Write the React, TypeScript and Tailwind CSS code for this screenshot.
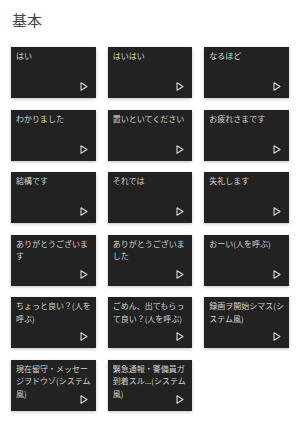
import React from 'react';

const phrases = [
  'はい',
  'はいはい',
  'なるほど',
  'わかりました',
  '置いといてください',
  'お疲れさまです',
  '結構です',
  'それでは',
  '失礼します',
  'ありがとうございます',
  'ありがとうございました',
  'おーい(人を呼ぶ)',
  'ちょっと良い？(人を呼ぶ)',
  'ごめん、出てもらって良い？(人を呼ぶ)',
  '録画ヲ開始シマス(システム風)',
  '現在留守・メッセージヲドウゾ(システム風)',
  '緊急通報・警備員ガ到着スル...(システム風)',
];

const PlayIcon = () => (
  <svg width="8" height="9" viewBox="0 0 8 9" className="absolute right-[8px] bottom-[7px]">
    <polygon points="1,0.8 7,4.5 1,8.2" fill="none" stroke="#d8d8d8" strokeWidth="1.1" strokeLinejoin="round" />
  </svg>
);

const PhraseCard = ({ text }: { text: string }) => (
  <div className="relative h-[51px] bg-[#222222] shadow-[0_1px_3px_rgba(0,0,0,0.25)] pl-[5px] pr-[2px] pt-[3px] overflow-hidden">
    <p className="text-[8px] leading-[12.5px] text-[#d2d2d2] break-all">{text}</p>
    <PlayIcon />
  </div>
);

export default function App() {
  return (
    <div
      className="w-[300px] h-[432px] bg-white px-[11px] pt-[10px]"
      style={{ fontFamily: '"Noto Sans CJK JP", "Noto Sans", sans-serif' }}
    >
      <h2 className="text-[15px] leading-[20px] text-[#444444] pl-[1px] mb-[17px]">基本</h2>
      <div className="grid grid-cols-3 gap-x-[12px] gap-y-[11.6px]">
        {phrases.map((p) => (
          <PhraseCard key={p} text={p} />
        ))}
      </div>
    </div>
  );
}
